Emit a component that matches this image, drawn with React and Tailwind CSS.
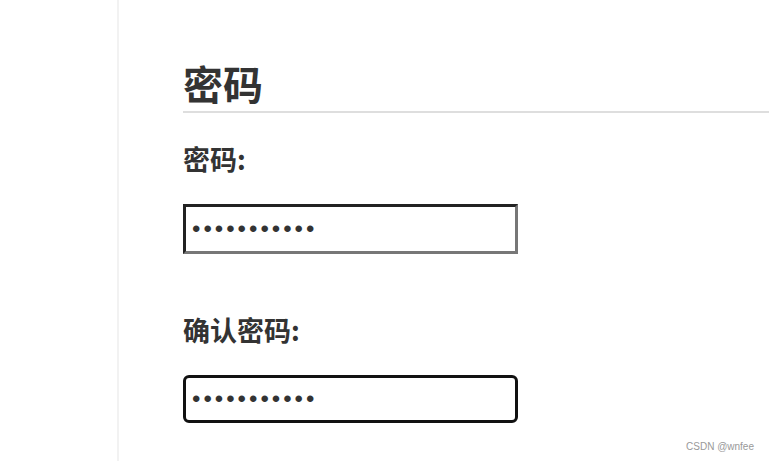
import React from "react";

export default function App() {
  const cjk = { fontFamily: '"Noto Sans CJK SC", "Noto Sans", sans-serif' };
  const pwFont = { fontFamily: '"Liberation Sans", Arial, sans-serif' };
  return (
    <div className="relative flex h-[461px] w-full overflow-hidden bg-white">
      <div className="w-[119px] shrink-0 border-r-2 border-[#f2f2f2]" />
      <div className="flex flex-1 flex-col pl-[64px] pt-[63px] text-[#333]" style={cjk}>
        <h2 className="border-b-2 border-[#dedede] pb-[8px] text-[40px] font-bold leading-[40px]">密码</h2>
        <label htmlFor="pw" className="mt-[32px] text-[27px] font-bold leading-[27px]">密码:</label>
        <input
          id="pw"
          type="password"
          readOnly
          value="12345678901"
          className="mt-[32px] h-[50px] w-[335px] border-[3px] border-solid border-t-[#222] border-l-[#222] border-b-[#777] border-r-[#777] bg-white pl-[6px] text-[24px] tracking-[3px] text-[#333] outline-none"
          style={pwFont}
        />
        <label htmlFor="pw2" className="mt-[62px] text-[27px] font-bold leading-[27px]">确认密码:</label>
        <input
          id="pw2"
          type="password"
          readOnly
          value="12345678901"
          className="mt-[32px] h-[48px] w-[335px] rounded-[6px] border-[3px] border-solid border-[#111] bg-white pl-[6px] text-[24px] tracking-[3px] text-[#333] outline-none"
          style={pwFont}
        />
      </div>
      <div
        className="absolute bottom-[7px] right-[15px] text-[10px] leading-[14px] text-[#999]"
        style={pwFont}
      >
        CSDN @wnfee
      </div>
    </div>
  );
}
